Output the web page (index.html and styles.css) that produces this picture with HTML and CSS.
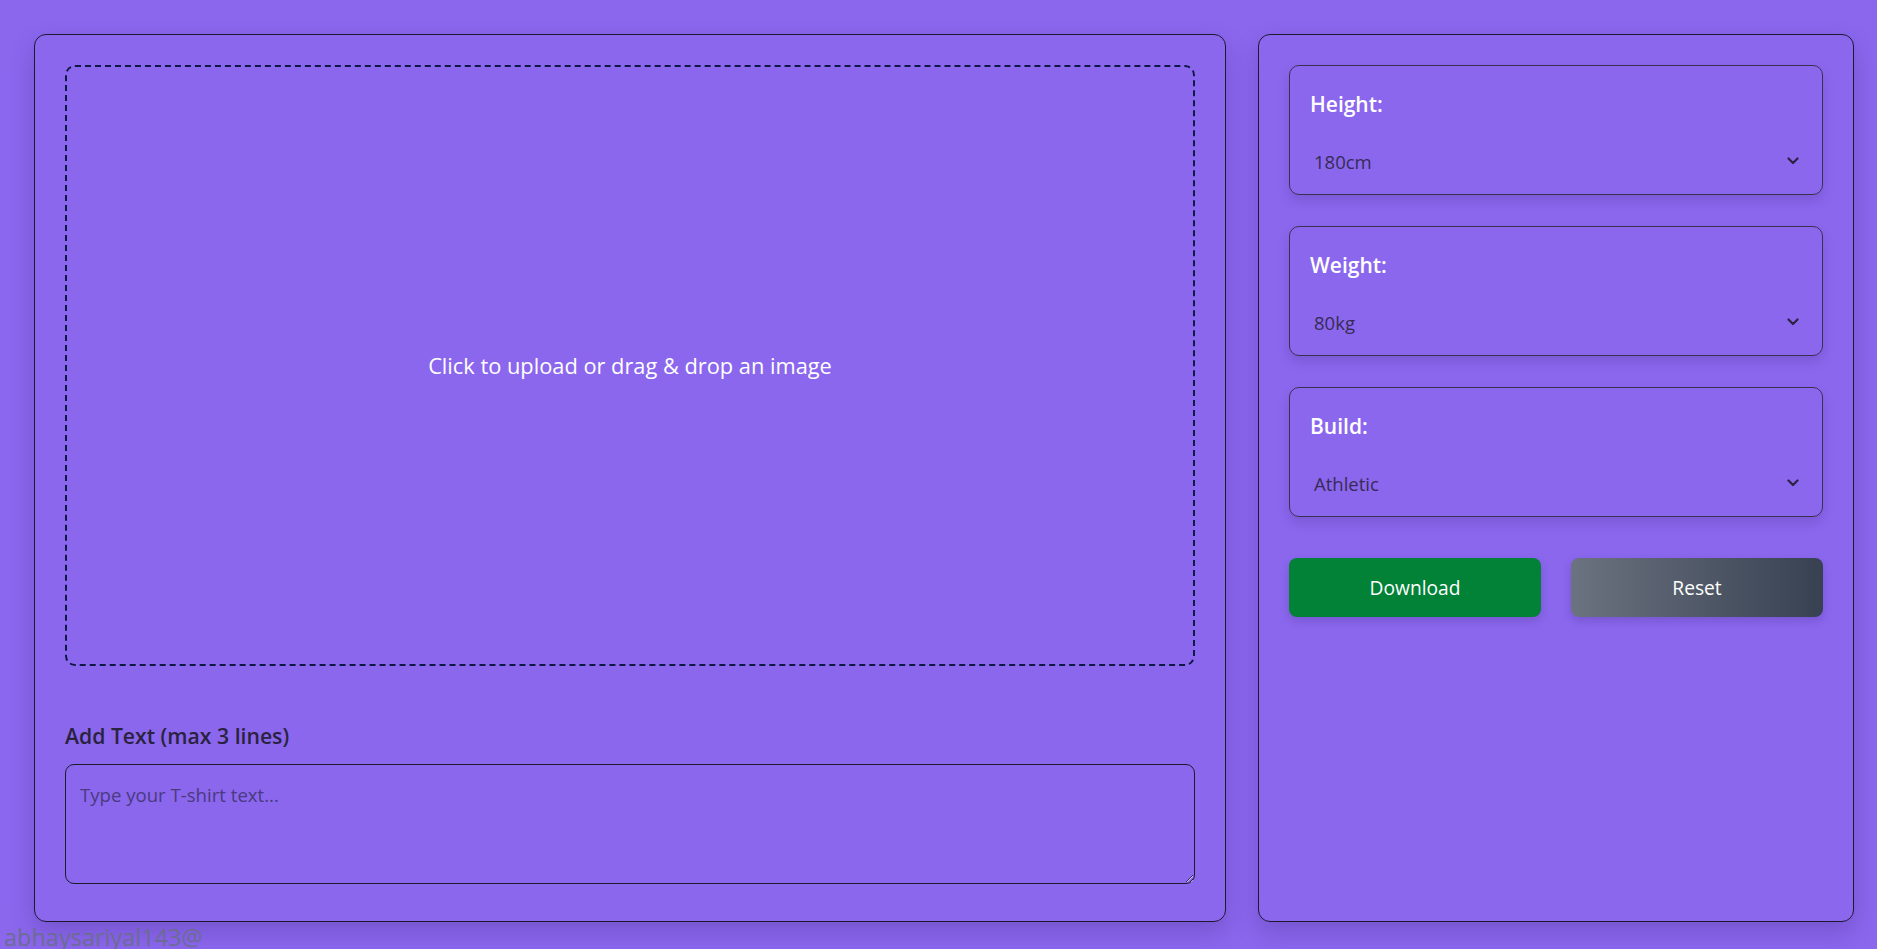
FILE: index.html
```html
<!DOCTYPE html>
<html lang="en">
<head>
<meta charset="utf-8">
<title>T-shirt Designer</title>
<link rel="stylesheet" href="styles.css">
</head>
<body>
<div class="page">
  <main class="layout">
    <section class="card editor">
      <div class="dropzone">
        <span class="dropzone-text">Click to upload or drag &amp; drop an image</span>
      </div>
      <label class="text-label" for="shirt-text">Add Text (max 3 lines)</label>
      <textarea id="shirt-text" class="text-input" placeholder="Type your T-shirt text..."></textarea>
    </section>

    <aside class="card controls">
      <div class="field">
        <label class="field-label" for="height">Height:</label>
        <div class="select-wrap">
          <select id="height" class="field-select">
            <option>180cm</option>
          </select>
          <svg class="chevron" width="12" height="8" viewBox="0 0 12 8"><path d="M1.5 1.5 L6 6 L10.5 1.5" fill="none" stroke="#2b2340" stroke-width="2.2" stroke-linecap="round" stroke-linejoin="round"/></svg>
        </div>
      </div>
      <div class="field">
        <label class="field-label" for="weight">Weight:</label>
        <div class="select-wrap">
          <select id="weight" class="field-select">
            <option>80kg</option>
          </select>
          <svg class="chevron" width="12" height="8" viewBox="0 0 12 8"><path d="M1.5 1.5 L6 6 L10.5 1.5" fill="none" stroke="#2b2340" stroke-width="2.2" stroke-linecap="round" stroke-linejoin="round"/></svg>
        </div>
      </div>
      <div class="field">
        <label class="field-label" for="build">Build:</label>
        <div class="select-wrap">
          <select id="build" class="field-select">
            <option>Athletic</option>
          </select>
          <svg class="chevron" width="12" height="8" viewBox="0 0 12 8"><path d="M1.5 1.5 L6 6 L10.5 1.5" fill="none" stroke="#2b2340" stroke-width="2.2" stroke-linecap="round" stroke-linejoin="round"/></svg>
        </div>
      </div>
      <div class="actions">
        <button class="btn btn-download" type="button">Download</button>
        <button class="btn btn-reset" type="button">Reset</button>
      </div>
    </aside>
  </main>
</div>
<div class="credit">abhaysariyal143@</div>
</body>
</html>
```

FILE: styles.css
```css
* {
  box-sizing: border-box;
}

html, body {
  margin: 0;
  padding: 0;
  background: #8b67ee;
  overflow: hidden;
}

body {
  font-family: "Open Sans", "Noto Sans", "Liberation Sans", sans-serif;
  color: #2a2340;
}

.page {
  padding: 34px 23px 0 34px;
}

.layout {
  display: grid;
  grid-template-columns: 2fr 1fr;
  gap: 32px;
}

.card {
  border: 1px solid #1c1a2c;
  border-radius: 12px;
  padding: 30px;
  background: #8b67ee;
  box-shadow: 0 10px 24px rgba(40, 20, 90, 0.22);
}

.editor {
  display: flex;
  flex-direction: column;
  padding-bottom: 37px;
}

.dropzone {
  height: 601px;
  border: 2px dashed #0e1844;
  border-radius: 10px;
  display: flex;
  align-items: center;
  justify-content: center;
}

.dropzone-text {
  color: #ffffff;
  font-size: 21.8px;
  line-height: 28px;
}

.text-label {
  margin-top: 56px;
  margin-bottom: 14px;
  font-size: 21.2px;
  line-height: 28px;
  font-weight: 600;
  color: #2a2340;
}

.text-input {
  display: block;
  width: 100%;
  height: 120px;
  border: 1px solid #1c1a2c;
  border-radius: 9px;
  background: transparent;
  padding: 16px 14px;
  font-family: inherit;
  font-size: 18.6px;
  line-height: 27px;
  color: #2a2340;
  outline: none;
}

.text-input::placeholder {
  color: #4a3a80;
  opacity: 1;
}

.controls {
  display: flex;
  flex-direction: column;
  gap: 31px;
}

.field {
  height: 130px;
  border: 1px solid #3a3150;
  border-radius: 10px;
  padding: 24px 20px 0 20px;
  box-shadow: 0 6px 12px rgba(40, 20, 90, 0.16);
}

.field-label {
  display: block;
  font-size: 21px;
  line-height: 28px;
  font-weight: 600;
  color: #ffffff;
  margin-bottom: 20px;
}

.select-wrap {
  position: relative;
}

.field-select {
  display: block;
  width: 100%;
  appearance: none;
  -webkit-appearance: none;
  border: none;
  background: transparent;
  padding: 10px 4px;
  font-family: inherit;
  font-size: 18.5px;
  line-height: 27px;
  height: 47px;
  color: #372b56;
  outline: none;
}

.chevron {
  position: absolute;
  right: 3px;
  top: 19px;
  pointer-events: none;
}

.actions {
  display: flex;
  gap: 30px;
  margin-top: 10px;
}

.btn {
  flex: 1;
  height: 59px;
  border: none;
  border-radius: 8px;
  color: #ffffff;
  font-family: inherit;
  font-size: 19.2px;
  box-shadow: 0 4px 10px rgba(40, 20, 90, 0.2);
}

.btn-download {
  background: #018237;
}

.btn-reset {
  background: linear-gradient(to right, #6b7280, #374151);
}

.credit {
  padding-left: 4px;
  font-size: 23.5px;
  line-height: 30px;
  color: #6c6c92;
}
```
